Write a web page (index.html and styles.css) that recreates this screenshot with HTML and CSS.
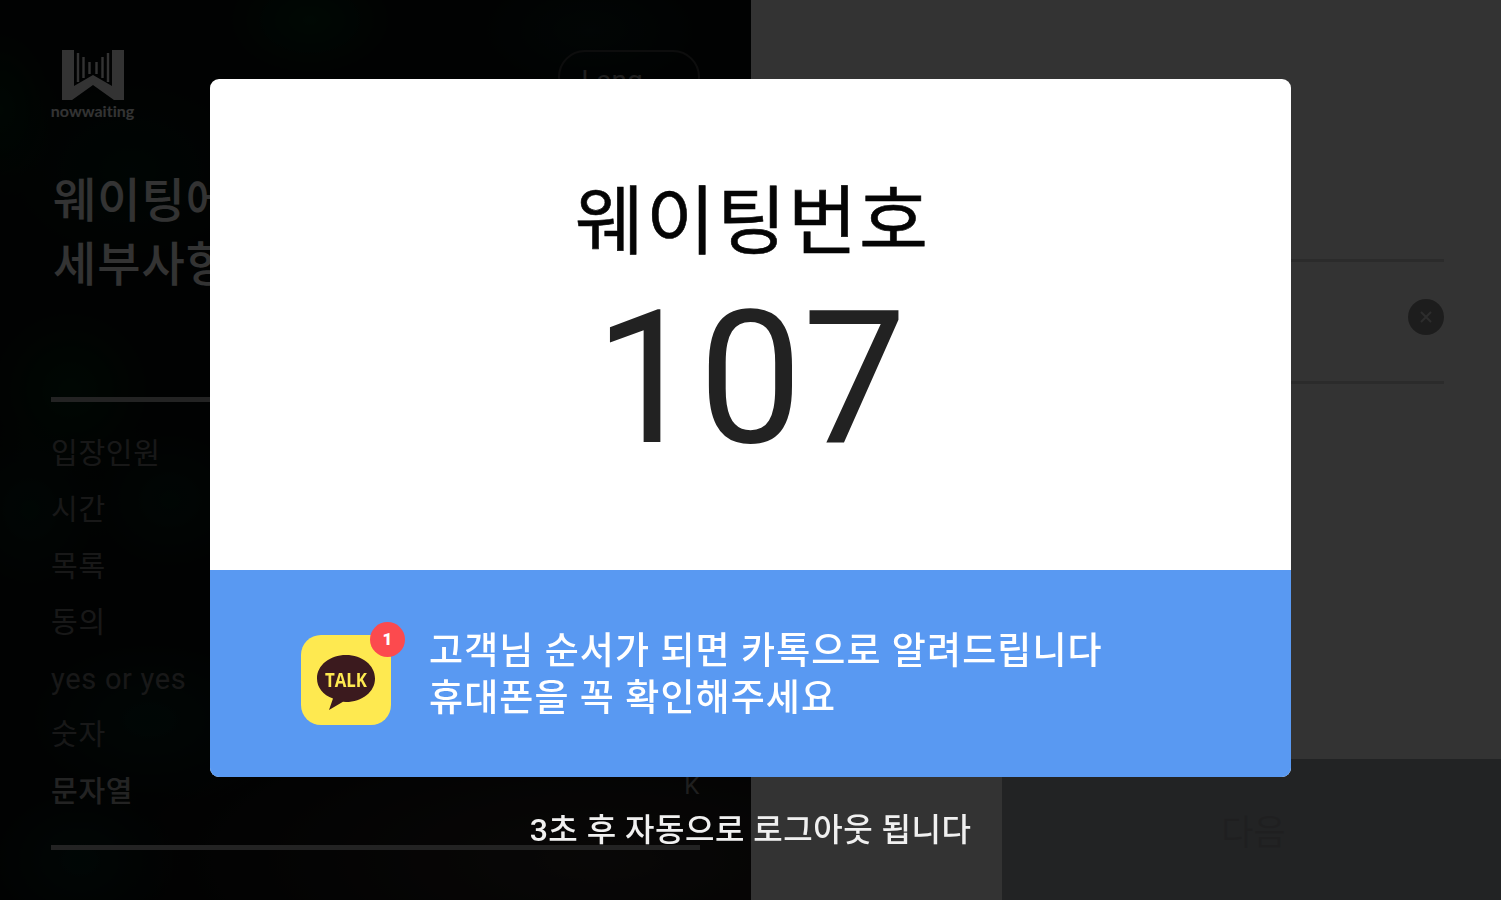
FILE: index.html
```html
<!DOCTYPE html>
<html lang="ko">
<head>
    <meta charset="UTF-8">
    <meta name="viewport" content="width=device-width, initial-scale=1.0">
    <title>nowwaiting</title>
    <link rel="stylesheet" href="styles.css">
</head>
<body>
    <div class="page">
        <div class="left">
            <div class="top">
                <div class="logo">
                    <svg width="62" height="50" viewBox="0 0 62 50">
                        <path d="M0 0H12V36L31 25L50 36V0H62V50H52L31 35L10 50H0Z" fill="#fff"/>
                        <path d="M16 3V32M21.500 7V28M27.500 12V24M34.500 12V24M40.500 7V28M46 3V32" stroke="#fff" stroke-width="2.4"/>
                    </svg>
                    <span>nowwaiting</span>
                </div>
                <button class="lang">Lang</button>
            </div>
            <h1>웨이팅에 필요한<br>세부사항</h1>
            <ul class="list">
                <li>입장인원</li>
                <li>시간</li>
                <li>목록</li>
                <li>동의</li>
                <li>yes or yes</li>
                <li>숫자</li>
                <li class="active">문자열 <span>K</span></li>
            </ul>
        </div>
        <div class="right">
            <div class="field">
                <svg width="36" height="36" viewBox="0 0 36 36">
                    <circle cx="18" cy="18" r="18" fill="#919191"/>
                    <path d="M13 13L23 23M23 13L13 23" stroke="#dedede" stroke-width="2"/>
                </svg>
            </div>
            <button class="next">다음</button>
        </div>
    </div>

    <div class="overlay">
        <div class="modal">
            <div class="number">
                <h2>웨이팅번호</h2>
                <p>107</p>
            </div>
            <div class="message">
                <div class="talk">
                    <svg width="90" height="90" viewBox="0 0 90 90">
                        <rect width="90" height="90" rx="20" fill="#fee950"/>
                        <path d="M45 20C61 20 74 30 74 43.500C74 57 61 67 45 67L42 66.800L28 75L32 63.500C22 60 16 52.500 16 43.500C16 30 29 20 45 20Z" fill="#3b1a1e"/>
                        <text class="talk-text" x="45" y="52" text-anchor="middle" textLength="42" lengthAdjust="spacingAndGlyphs">TALK</text>
                    </svg>
                    <span class="badge">1</span>
                </div>
                <p>고객님 순서가 되면 카톡으로 알려드립니다<br>휴대폰을 꼭 확인해주세요</p>
            </div>
        </div>
        <p class="logout">3초 후 자동으로 로그아웃 됩니다</p>
    </div>
</body>
</html>
```

FILE: styles.css
```css
* {
    box-sizing: border-box;
    margin: 0;
    padding: 0;
}
body {
    font-family: Roboto, "Noto Sans CJK KR", sans-serif;
    height: 900px;
    overflow: hidden;
}
button {
    font-family: inherit;
    border: none;
}
.page {
    display: flex;
    height: 900px;
}
.left {
    width: 751px;
    padding: 50px 51px 0;
    color: white;
    background:
        radial-gradient(ellipse 90px 60px at 310px 20px, #002a14, transparent),
        radial-gradient(ellipse 150px 110px at 130px 170px, #021c14, transparent),
        radial-gradient(ellipse 60px 90px at 0 110px, #002410, transparent),
        radial-gradient(ellipse 130px 70px at 590px 30px, #0a1e1a, transparent),
        radial-gradient(ellipse 90px 90px at 70px 390px, #002610, transparent),
        radial-gradient(ellipse 80px 90px at 30px 510px, #042018, transparent),
        radial-gradient(ellipse 90px 80px at 170px 500px, #042018, transparent),
        radial-gradient(ellipse 140px 90px at 150px 720px, #04221c, transparent),
        radial-gradient(ellipse 100px 80px at 80px 860px, #04221c, transparent),
        radial-gradient(ellipse 480px 170px at 600px 860px, #2c2624, transparent),
        #080a0a;
}
.top {
    display: flex;
    justify-content: space-between;
    height: 119px;
}
.logo {
    display: flex;
    flex-direction: column;
    align-items: center;
    width: 83px;
}
.logo span {
    font-family: Lato, sans-serif;
    font-size: 16px;
    font-weight: bold;
    font-variant-ligatures: none;
    line-height: 22px;
}
.lang {
    width: 142px;
    height: 54px;
    padding-right: 34px;
    font-size: 28px;
    line-height: 58px;
    color: #999;
    background: none;
    border: 2px solid #444;
    border-radius: 27px;
}
h1 {
    height: 228px;
    padding-left: 2px;
    font-size: 47px;
    font-weight: 500;
    line-height: 64px;
    letter-spacing: 1px;
    white-space: nowrap;
}
.list {
    height: 453px;
    padding-top: 24px;
    list-style: none;
    border-top: 5px solid #b0b0b0;
    border-bottom: 5px solid #b0b0b0;
}
.list li {
    display: flex;
    justify-content: space-between;
    font-size: 29px;
    line-height: 56.300px;
    letter-spacing: 0.7px;
    color: #7a7a7a;
}
.list .active {
    font-weight: 500;
    color: #b0b0b0;
}
.active span {
    margin-top: -6px;
    font-size: 24px;
    font-weight: 400;
    color: #999;
}
.right {
    display: flex;
    flex-direction: column;
    justify-content: space-between;
    align-items: flex-end;
    width: 750px;
    padding-top: 259px;
    background: white;
}
.field {
    display: flex;
    justify-content: flex-end;
    align-items: center;
    width: 634px;
    height: 125px;
    margin-right: 57px;
    padding-bottom: 9px;
    border-top: 3px solid #d4d4d4;
    border-bottom: 3px solid #d4d4d4;
}
.next {
    width: 499px;
    height: 141px;
    padding-left: 4px;
    font-size: 35px;
    color: #999da2;
    background: #aaafb4;
}
.overlay {
    position: fixed;
    top: 0;
    left: 0;
    width: 100%;
    height: 100%;
    padding-top: 79px;
    display: flex;
    flex-direction: column;
    align-items: center;
    background: rgba(0, 0, 0, 0.8);
}
.modal {
    width: 1081px;
    height: 698px;
    border-radius: 9px;
    overflow: hidden;
    background: white;
}
.number {
    height: 491px;
    padding-top: 88px;
    text-align: center;
}
.number h2 {
    padding-left: 4px;
    font-size: 75px;
    font-weight: 400;
    line-height: 110px;
    letter-spacing: 2px;
    color: #050505;
    -webkit-text-stroke: 0.6px #050505;
}
.number p {
    margin-top: -8px;
    font-size: 185px;
    line-height: 219px;
    color: #222;
}
.message {
    display: flex;
    align-items: center;
    gap: 38px;
    height: 207px;
    padding: 12px 0 0 91px;
    background: #5999f2;
}
.message p {
    margin-top: -9px;
    font-size: 37px;
    font-weight: 500;
    line-height: 47px;
    letter-spacing: 1.100px;
    color: white;
}
.talk {
    position: relative;
    width: 90px;
    height: 90px;
}
.talk-text {
    font-family: "Open Sans", sans-serif;
    font-size: 20px;
    font-weight: 700;
    fill: #fee950;
}
.badge {
    position: absolute;
    top: -13px;
    right: -14px;
    width: 35px;
    height: 35px;
    border-radius: 50%;
    font-size: 17px;
    font-weight: 900;
    line-height: 35px;
    text-align: center;
    color: white;
    background: #fc4a4e;
}
.logout {
    margin-top: 28px;
    font-size: 32px;
    font-weight: 500;
    line-height: 50px;
    letter-spacing: 0.5px;
    color: #f0f0f0;
}
```
